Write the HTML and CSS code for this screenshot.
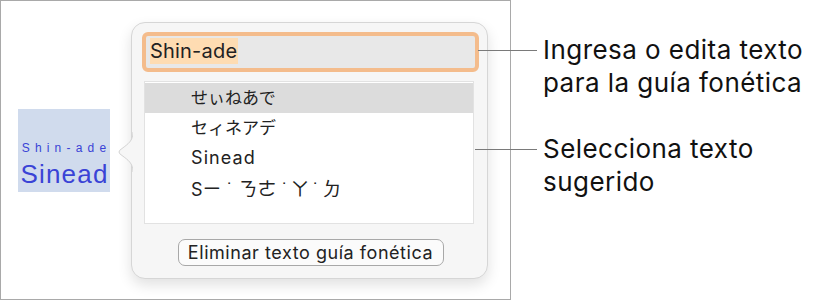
FILE: index.html
```html
<!DOCTYPE html>
<html lang="es">
<head>
<meta charset="utf-8">
<title>Guía fonética</title>
<link rel="stylesheet" href="styles.css">
</head>
<body>
  <div class="frame">
    <div class="sample">
      <div class="sample-ruby">Shin-ade</div>
      <div class="sample-base">Sinead</div>
    </div>
    <div class="popover">
      <svg class="notch" width="20" height="40" viewBox="0 0 20 40">
        <path d="M20,0 C20,9 15,12 9,16.5 Q3,20 9,23.5 C15,28 20,31 20,40 Z" fill="#f6f6f6"/>
        <path d="M20,0 C20,9 15,12 9,16.5 Q3,20 9,23.5 C15,28 20,31 20,40" fill="none" stroke="#d4d4d4" stroke-width="1"/>
      </svg>
      <div class="field"><span class="field-sel">Shin-ade</span></div>
      <div class="list">
        <div class="row cjk selected">せぃねあで</div>
        <div class="row cjk">セィネアデ</div>
        <div class="row latin">Sinead</div>
        <div class="row bopo">S<span class="bp">ㄧ</span><span class="tone t1">˙</span><span class="bp">ㄋㄜ</span><span class="tone t2">˙</span><span class="bp">ㄚ</span><span class="tone t3">˙</span><span class="bp">ㄉ</span></div>
      </div>
      <button class="btn">Eliminar texto guía fonética</button>
    </div>
  </div>
  <div class="labels">
    <div class="label">Ingresa o edita texto<br>para la guía fonética</div>
    <div class="label second">Selecciona texto<br>sugerido</div>
  </div>
  <div class="callout c1"></div>
  <div class="callout c2"></div>
</body>
</html>
```
FILE: styles.css
```css
html, body {
  margin: 0;
  padding: 0;
  background: #ffffff;
}
body {
  display: flex;
  align-items: flex-start;
  font-family: "Inter", "Noto Sans CJK JP", sans-serif;
  color: #222;
}
.frame {
  width: 511px;
  height: 300px;
  box-sizing: border-box;
  border: 1px solid #a9a9a9;
  display: flex;
  align-items: center;
  padding-left: 17px;
  gap: 21px;
}
.sample {
  width: 92px;
  height: 83px;
  box-sizing: border-box;
  background: #d0dbed;
  display: flex;
  flex-direction: column;
  align-items: center;
  padding-top: 32px;
  color: #3a43d6;
  font-family: "Liberation Sans", sans-serif;
}
.sample-ruby {
  font-size: 12px;
  line-height: 14px;
  letter-spacing: 5.2px;
  margin-right: -5px;
}
.sample-base {
  font-size: 26px;
  line-height: 30px;
  letter-spacing: 1.2px;
  margin-right: -1px;
  margin-top: 4px;
}
.popover {
  position: relative;
  width: 357px;
  height: 257px;
  box-sizing: border-box;
  border: 1px solid #d6d6d6;
  border-radius: 14px;
  background: #f6f6f6;
  padding: 9px 8px 0 10px;
  display: flex;
  flex-direction: column;
  box-shadow: 0 6px 14px rgba(0,0,0,0.12);
}
.notch {
  position: absolute;
  left: -19px;
  top: 109px;
}
.field {
  height: 40px;
  box-sizing: border-box;
  border: 4px solid #f4bc8c;
  border-radius: 6px;
  background: #e8e8e8;
  padding: 2px 4px;
  font-size: 20px;
  line-height: 26px;
  letter-spacing: 0.2px;
  color: #222;
}
.field-sel {
  background: #fedcb2;
  display: inline-block;
  padding-right: 1px;
}
.list {
  margin: 9px 5px 0 2px;
  height: 143px;
  box-sizing: border-box;
  background: #ffffff;
  border: 1px solid #e2e2e2;
  padding-top: 1px;
}
.row {
  height: 30px;
  line-height: 30px;
  padding-left: 46px;
  font-size: 18px;
  color: #222;
  white-space: nowrap;
}
.row.cjk {
  font-size: 17px;
}
.row.latin {
  letter-spacing: 1.1px;
}
.row.bopo {
  display: flex;
  align-items: baseline;
}
.bp {
  font-family: "Noto Sans CJK TC", sans-serif;
  font-size: 19px;
}
.tone {
  display: inline-block;
  text-align: center;
  font-family: "Liberation Sans", sans-serif;
  font-size: 18px;
}
.t1 { width: 17px; }
.t2 { width: 11px; padding-left: 3px; }
.t3 { width: 13px; }
.row.selected {
  background: #dcdcdc;
}
.btn {
  align-self: center;
  margin-top: 15px;
  width: 266px;
  height: 27px;
  box-sizing: border-box;
  border: 1px solid #a8a8a8;
  border-radius: 7px;
  background: #fbfbfb;
  font-family: "Inter", sans-serif;
  font-size: 18px;
  letter-spacing: 0.55px;
  color: #222;
  padding: 0;
}
.labels {
  margin-left: 32px;
  padding-top: 33px;
  font-size: 26px;
  line-height: 33px;
  letter-spacing: 0.45px;
  color: #111;
}
.label.second {
  margin-top: 33px;
}
.callout {
  position: absolute;
  height: 1px;
  background: #7a7a7a;
}
.c1 { left: 478px; top: 50px; width: 59px; }
.c2 { left: 475px; top: 149px; width: 62px; }
```
